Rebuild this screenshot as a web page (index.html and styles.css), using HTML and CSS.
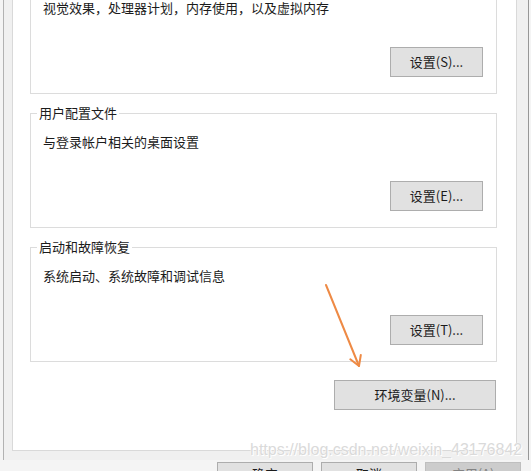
FILE: index.html
```html
<!DOCTYPE html>
<html lang="zh-CN">
<head>
<meta charset="utf-8">
<title>系统属性 - 高级</title>
<link rel="stylesheet" href="styles.css">
</head>
<body>
<div class="dialog">
  <div class="panel">
    <fieldset class="group">
      <legend>性能</legend>
      <p class="desc">视觉效果，处理器计划，内存使用，以及虚拟内存</p>
      <div class="btn-row"><button class="btn">设置(S)...</button></div>
    </fieldset>
    <fieldset class="group">
      <legend>用户配置文件</legend>
      <p class="desc">与登录帐户相关的桌面设置</p>
      <div class="btn-row"><button class="btn">设置(E)...</button></div>
    </fieldset>
    <fieldset class="group">
      <legend>启动和故障恢复</legend>
      <p class="desc">系统启动、系统故障和调试信息</p>
      <div class="btn-row"><button class="btn">设置(T)...</button></div>
    </fieldset>
    <div class="env-row"><button class="btn btn-env">环境变量(N)...</button></div>
  </div>
  <div class="footer">
    <button class="btn btn-foot">确定</button>
    <button class="btn btn-foot">取消</button>
    <button class="btn btn-foot btn-disabled">应用(A)</button>
  </div>
</div>
<div class="watermark">https://blog.csdn.net/weixin_43176842</div>
<svg class="arrow" width="531" height="471" viewBox="0 0 531 471" xmlns="http://www.w3.org/2000/svg">
  <g fill="none" stroke="#ee8a45" stroke-width="2" stroke-linecap="round" stroke-linejoin="round">
    <line x1="326" y1="285" x2="359" y2="366"/>
    <polyline points="350.3,359.3 359,366 360.8,355"/>
  </g>
</svg>
</body>
</html>
```
FILE: styles.css
```css
html, body {
  margin: 0;
  padding: 0;
}
body {
  width: 531px;
  height: 471px;
  overflow: hidden;
  background: #f4f4f4;
  font-family: "Noto Sans CJK SC", "Noto Sans", sans-serif;
  font-size: 13px;
  color: #1b1b1b;
  position: relative;
}
.dialog {
  margin-left: 3px;
  width: 526px;
  height: 500px;
  border-left: 1px solid #b2b2b2;
  border-right: 1px solid #979797;
  background: #f0f0f0;
  padding: 0 11px 0 8px;
  box-sizing: border-box;
}
.panel {
  margin-top: -40px;
  background: #fff;
  border: 1px solid #d9d9d9;
  padding: 10px 0 40px 0;
}
.group {
  margin: 11px 19px 0 17px;
  padding: 0 13px 16px 12px;
  border: 1px solid #dcdcdc;
  min-width: 0;
}
.group:first-child {
  margin-top: 0;
}
.group legend {
  padding: 0 2px;
  margin-left: -6px;
  line-height: 16px;
  font-size: 13px;
}
.desc {
  margin: 12px 0 0 0;
  line-height: 18px;
  white-space: nowrap;
}
.btn-row {
  display: flex;
  justify-content: flex-end;
  margin-top: 30px;
}
.btn {
  font-family: "Noto Sans CJK SC", "Noto Sans", sans-serif;
  font-size: 13px;
  color: #1b1b1b;
  background: #e1e1e1;
  border: 1px solid #adadad;
  border-radius: 0;
  height: 30px;
  width: 93px;
  padding: 0;
  margin: 0;
  box-sizing: border-box;
  line-height: 28px;
  text-align: center;
}
.env-row {
  display: flex;
  justify-content: flex-end;
  margin: 18px 20px 0 0;
}
.btn-env {
  width: 162px;
}
.footer {
  display: flex;
  justify-content: flex-end;
  gap: 8px;
  margin-top: 11px;
  margin-right: -4px;
}
.btn-foot {
  width: 96px;
  line-height: 22px;
  padding-top: 0;
  align-self: flex-start;
  display: flex;
  align-items: flex-start;
  justify-content: center;
}
.btn-disabled {
  background: #cccccc;
  border-color: #bfbfbf;
  color: #838383;
}
.watermark {
  position: absolute;
  left: 250px;
  top: 441px;
  font-family: "Liberation Sans", Arial, sans-serif;
  font-size: 16px;
  color: #dadada;
  text-shadow: 0 0 1px #ffffff, 0 0 1px #ffffff, 1px 1px 0 #ffffff;
  white-space: nowrap;
}
.arrow {
  position: absolute;
  left: 0;
  top: 0;
}
```
